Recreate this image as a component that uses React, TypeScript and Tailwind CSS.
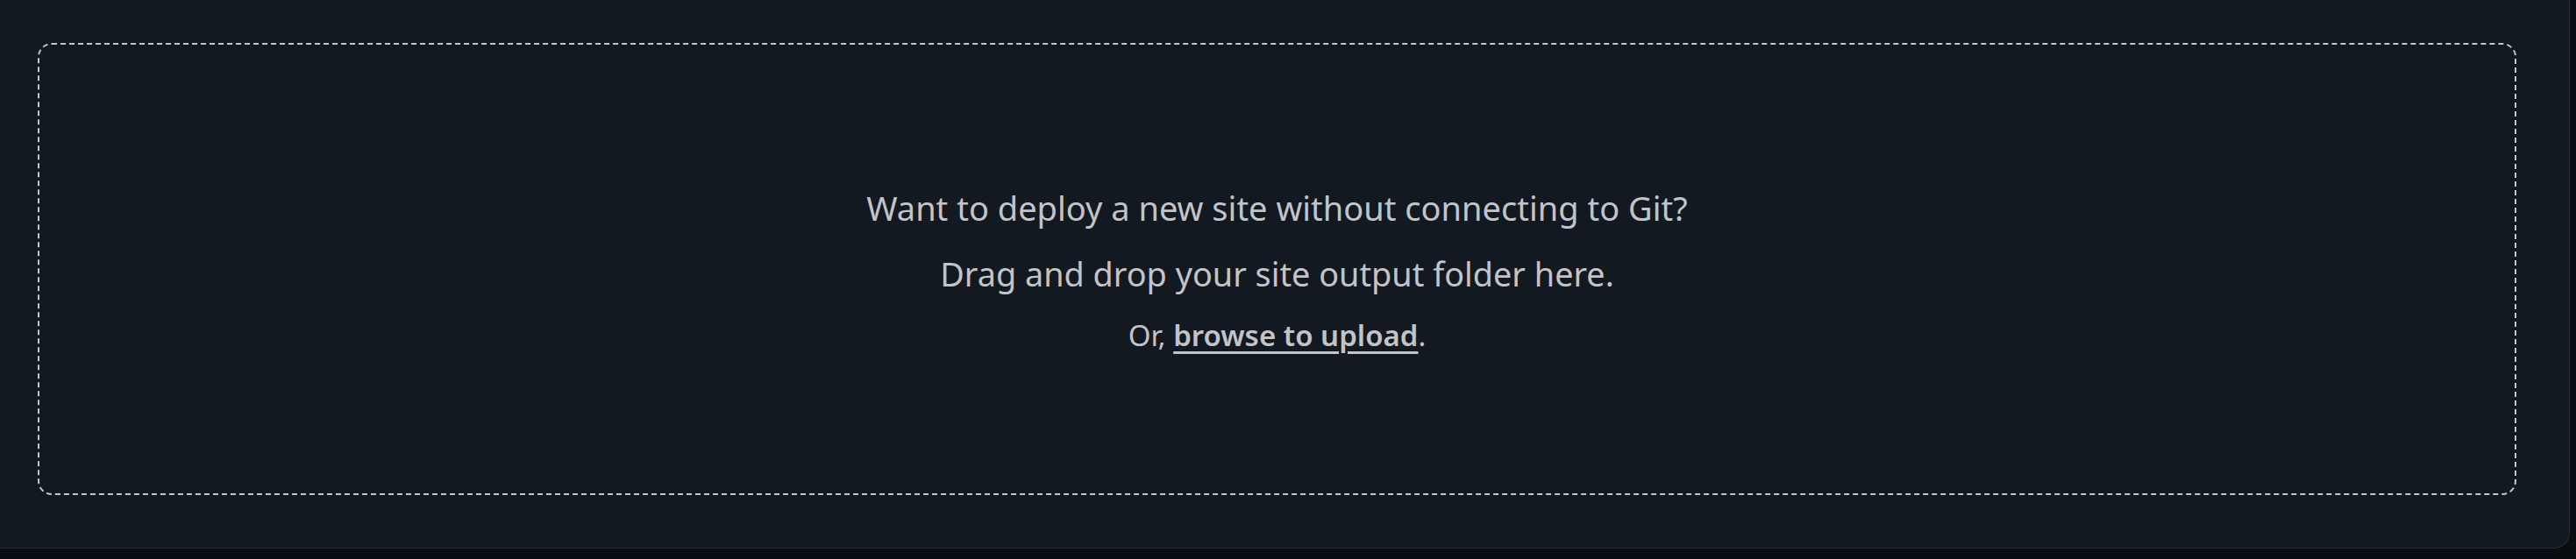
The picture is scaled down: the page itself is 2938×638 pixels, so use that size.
export default function App() {
  return (
    <div
      className="w-full h-[638px] bg-[#090c10] overflow-hidden"
      style={{ fontFamily: '"Segoe UI", "Noto Sans", "Open Sans", sans-serif' }}
    >
      <div className="box-border w-[2931px] h-[626px] bg-[#131920] border-r border-b border-[#272c36] rounded-br-[18px] pl-[43px] pt-[49px] pr-[60px] pb-[60px]">
        <div className="box-border h-full border-2 border-dashed border-[#c3c7ce] rounded-[16px] flex flex-col items-center pt-[158px] text-[#c2c4c8]">
          <p className="text-[38px] leading-[56px]">Want to deploy a new site without connecting to Git?</p>
          <p className="text-[37.8px] leading-[56px] mt-[20px]">Drag and drop your site output folder here.</p>
          <p className="text-[33px] leading-[48px] mt-[18px]">
            Or,{" "}
            <a href="#" className="font-semibold underline decoration-[3px] underline-offset-[6px]">
              browse to upload
            </a>
            .
          </p>
        </div>
      </div>
    </div>
  );
}
